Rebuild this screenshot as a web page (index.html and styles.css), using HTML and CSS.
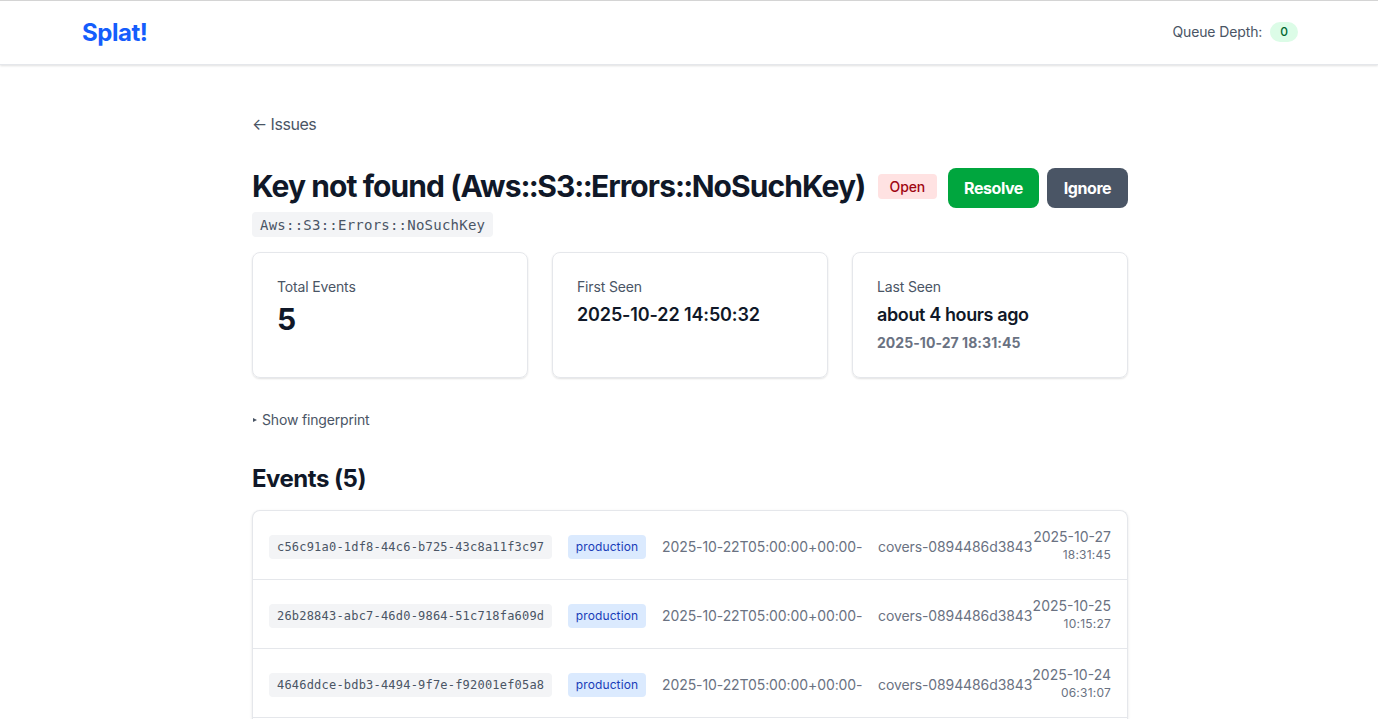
FILE: index.html
```html
<!DOCTYPE html>
<html lang="en">
<head>
<meta charset="utf-8">
<title>Splat!</title>
<link rel="stylesheet" href="styles.css">
</head>
<body>
<header class="topbar">
  <a class="brand">Splat!</a>
  <div class="queue"><span>Queue Depth:</span><span class="depth">0</span></div>
</header>
<main class="page">
  <a class="back">← Issues</a>
  <div class="heading">
    <div class="title-block">
      <h1 class="title">Key not found (Aws<span class="sep">::</span>S3<span class="sep">::</span>Errors<span class="sep">::</span>NoSuchKey)</h1>
      <code class="exception">Aws::S3::Errors::NoSuchKey</code>
    </div>
    <div class="actions">
      <span class="status">Open</span>
      <button class="btn resolve">Resolve</button>
      <button class="btn ignore">Ignore</button>
    </div>
  </div>
  <section class="stats">
    <div class="card"><div class="label">Total Events</div><div class="count">5</div></div>
    <div class="card"><div class="label">First Seen</div><div class="when digits">2025-10-22 14:50:32</div></div>
    <div class="card"><div class="label">Last Seen</div><div class="when">about 4 hours ago</div><div class="exact">2025-10-27 18:31:45</div></div>
  </section>
  <div class="fingerprint"><span class="marker"></span><span>Show fingerprint</span></div>
  <h2 class="events-title">Events (5)</h2>
  <section class="events">
    <div class="event"><div class="details"><code class="id">c56c91a0-1df8-44c6-b725-43c8a11f3c97</code><span class="env">production</span><span class="release">2025-10-22T05:00:00+00:00-</span><span class="server">covers-0894486d3843</span></div><div class="stamp"><div class="date">2025-10-27</div><div class="time">18:31:45</div></div></div>
    <div class="event"><div class="details"><code class="id">26b28843-abc7-46d0-9864-51c718fa609d</code><span class="env">production</span><span class="release">2025-10-22T05:00:00+00:00-</span><span class="server">covers-0894486d3843</span></div><div class="stamp"><div class="date">2025-10-25</div><div class="time">10:15:27</div></div></div>
    <div class="event"><div class="details"><code class="id">4646ddce-bdb3-4494-9f7e-f92001ef05a8</code><span class="env">production</span><span class="release">2025-10-22T05:00:00+00:00-</span><span class="server">covers-0894486d3843</span></div><div class="stamp"><div class="date">2025-10-24</div><div class="time">06:31:07</div></div></div>
  </section>
</main>
</body>
</html>
```
FILE: styles.css
```css
* { box-sizing: border-box; margin: 0; }
body { font-family: Inter, sans-serif; font-size: 16px; line-height: 24px; color: #101828; background: #fff; height: 719px; }
.topbar { height: 65px; border-top: 1px solid #d4d4d4; border-bottom: 1px solid #e5e7eb; padding: 0 80px 0 82px; display: flex; align-items: center; justify-content: space-between; box-shadow: 0 1px 2px rgba(0,0,0,.12); }
.brand { font-size: 24px; line-height: 32px; font-weight: 700; color: #155dfc; letter-spacing: -.45px; }
.queue { display: flex; align-items: center; gap: 8px; margin-bottom: 2px; font-size: 14px; line-height: 20px; color: #4a5565; letter-spacing: -.12px; }
.depth { font-size: 12px; line-height: 16px; font-weight: 500; color: #016630; background: #dcfce7; border-radius: 10px; padding: 2px 10px; letter-spacing: 0; }
.page { width: 876px; margin-left: 252px; padding-top: 47px; }
.back { display: block; color: #4a5565; letter-spacing: -.45px; word-spacing: -.3px; }
.heading { display: flex; justify-content: space-between; margin-top: 32px; height: 84px; }
.title { font-size: 30px; line-height: 37px; font-weight: 700; white-space: nowrap; letter-spacing: -.92px; }
.sep { letter-spacing: -1.7px; }
.exception { display: inline-block; margin-top: 7px; padding: 3px 8px 1px; font: 14px/21px "DejaVu Sans Mono", monospace; letter-spacing: .235px; color: #4a5565; background: #f3f4f6; border-radius: 4px; }
.actions { display: flex; align-items: flex-start; gap: 8px; }
.status { margin: 6px 3px 0 0; padding: 3px 12px; font-size: 14px; line-height: 19px; font-weight: 500; color: #9f0712; background: #ffe2e2; border-radius: 4px; letter-spacing: -.15px; }
.btn { font: 700 16px/24px Inter, sans-serif; letter-spacing: -.45px; color: #fff; border: 0; border-radius: 8px; padding: 8px 0; text-align: center; }
.resolve { width: 91px; background: #00a63e; }
.ignore { width: 81px; background: #4a5565; }
.stats { display: grid; grid-template-columns: repeat(3, 1fr); gap: 24px; }
.card { height: 126px; border: 1px solid #e5e7eb; border-radius: 8px; padding: 24px; box-shadow: 0 1px 2px rgba(0,0,0,.12); }
.label { font-size: 14px; line-height: 20px; color: #4a5565; letter-spacing: -.15px; }
.count { font-size: 30px; line-height: 36px; font-weight: 700; margin-top: 4px; }
.when { font-size: 18px; line-height: 28px; font-weight: 600; margin-top: 4px; letter-spacing: -.38px; }
.digits { letter-spacing: -.13px; }
.exact { font-size: 14px; line-height: 20px; font-weight: 700; color: #6a7282; margin-top: 4px; letter-spacing: .05px; }
.fingerprint { display: flex; align-items: center; gap: 5px; margin-top: 32px; font-size: 14px; line-height: 20px; color: #4a5565; letter-spacing: -.17px; }
.marker { margin-left: 1px; border-left: 4px solid #4a5565; border-top: 2px solid transparent; border-bottom: 2px solid transparent; }
.events-title { font-size: 24px; line-height: 32px; font-weight: 700; letter-spacing: -.5px; margin: 33px 0 15px; }
.events { border: 1px solid #e5e7eb; border-bottom: 0; border-radius: 8px 8px 0 0; height: 209px; box-shadow: 0 1px 3px rgba(0,0,0,.1); }
.event { display: flex; align-items: center; justify-content: space-between; height: 69px; padding: 0 16px; border-bottom: 1px solid #e5e7eb; font-size: 14px; color: #6a7282; white-space: nowrap; }
.details { display: flex; align-items: center; padding-top: 4px; }
.id { width: 283px; padding: 4px 8px; font: 12px/16px "DejaVu Sans Mono", monospace; letter-spacing: .2px; color: #4a5565; background: #f3f4f6; border-radius: 4px; }
.env { width: 78px; text-align: center; margin: 0 16px; padding: 4px 0; font-size: 12px; line-height: 16px; font-weight: 400; color: #193cb8; background: #dbeafe; border-radius: 4px; letter-spacing: .1px; }
.release { width: 216px; letter-spacing: -.09px; }
.server { letter-spacing: -.1px; }
.stamp { width: 79px; text-align: right; }
.date { line-height: 20px; }
.time { font-size: 12px; line-height: 16px; letter-spacing: .22px; }
```
